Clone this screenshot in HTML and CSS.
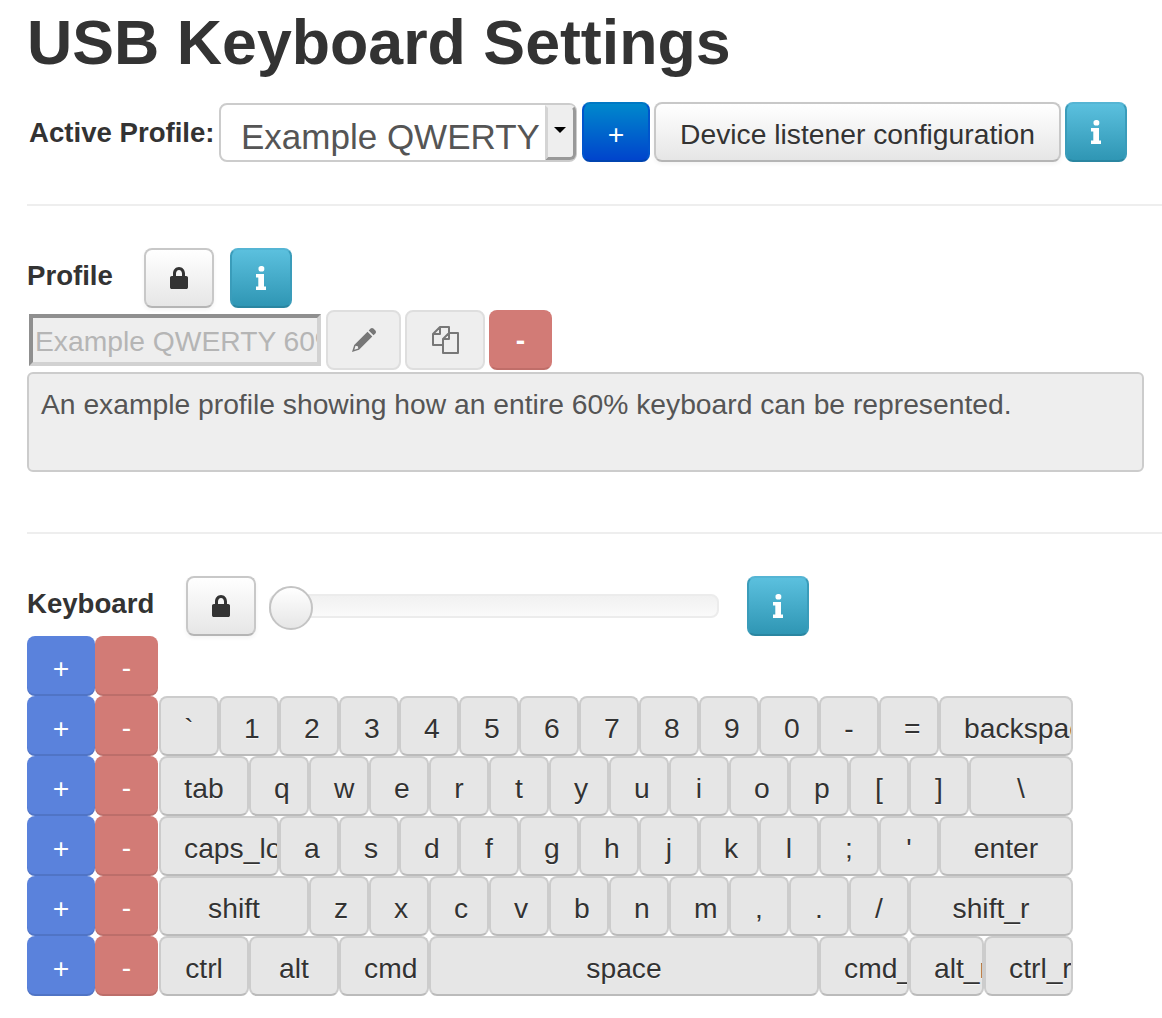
FILE: index.html
```html
<!DOCTYPE html>
<html lang="en">
<head>
<meta charset="utf-8">
<title>USB Keyboard Settings</title>
<link rel="stylesheet" href="styles.css">
</head>
<body>
<svg class="defs" width="0" height="0" aria-hidden="true">
  <symbol id="i-lock" viewBox="0 0 18 22"><path fill="currentColor" d="M3 9V6.5C3 2.9 5.600 0 9 0s6 2.900 6 6.500V9h1.200c1 0 1.800.8 1.800 1.800v9.400c0 1-.8 1.800-1.800 1.800H1.800C.8 22 0 21.200 0 20.200v-9.400C0 9.800.8 9 1.800 9H3zm3 0h6V6.500C12 4.600 10.700 3 9 3S6 4.600 6 6.500V9z"/></symbol>
  <symbol id="i-info" viewBox="0 0 10 24"><path fill="currentColor" d="M2.500 2.200C2.500 1 3.500 0 5 0h1c1.500 0 2.300 1 2.300 2.200v1.300C8.300 4.800 7.500 5.600 6 5.600H5c-1.500 0-2.500-.8-2.500-2.100V2.200zM0 8h8v12.500h2V24H0v-3.500h2.300V11.500H0V8z"/></symbol>
  <symbol id="i-pencil" viewBox="0 0 24 24"><path fill="currentColor" d="M18.600.6c.8-.8 2-.8 2.800 0l2 2c.8.8.8 2 0 2.800L21.500 7.300 16.700 2.500 18.600.6zM15.500 3.700l4.800 4.800L7 21.800 0 24l2.200-7L15.500 3.700zM3.500 17.700l-1.200 4 4-1.200-.5-2.300-2.300-.5z"/></symbol>
  <symbol id="i-copy" viewBox="0 0 27 28"><path fill="none" stroke="currentColor" stroke-width="2" stroke-linejoin="round" d="M17 7V1H8L1 8v11h10M8 1v7H1M17 7h9v20H11V13zM17 7v6h-6"/></symbol>
</svg>
<main class="page">
  <h1 class="title">USB Keyboard Settings</h1>
  <div class="active-row">
    <label class="strong active-label">Active Profile:</label>
    <div class="select-wrap">
      <select class="profile-select"><option>Example QWERTY</option></select>
      <span class="select-arrow"></span>
    </div>
    <button class="btn btn-primary btn-plus">+</button>
    <button class="btn btn-default btn-device">Device listener configuration</button>
    <button class="btn btn-info"><svg class="ic-info"><use href="#i-info"/></svg></button>
  </div>
  <hr class="rule rule-first">
  <section class="profile">
    <div class="head-row">
      <h2 class="strong section-name profile-name">Profile</h2>
      <button class="btn btn-default btn-lock"><svg class="ic-lock"><use href="#i-lock"/></svg></button>
      <button class="btn btn-info"><svg class="ic-info"><use href="#i-info"/></svg></button>
    </div>
    <div class="name-row">
      <input class="name-input" disabled value="Example QWERTY 60%">
      <button class="btn btn-off btn-edit" disabled><svg class="ic-pencil"><use href="#i-pencil"/></svg></button>
      <button class="btn btn-off btn-copy" disabled><svg class="ic-copy"><use href="#i-copy"/></svg></button>
      <button class="btn btn-off-red btn-minus" disabled>-</button>
    </div>
    <textarea class="description" disabled>An example profile showing how an entire 60% keyboard can be represented.</textarea>
  </section>
  <hr class="rule rule-second">
  <section class="keyboard">
    <div class="head-row">
      <h2 class="strong section-name keyboard-name">Keyboard</h2>
      <button class="btn btn-default btn-lock"><svg class="ic-lock"><use href="#i-lock"/></svg></button>
      <div class="slider"><span class="slider-handle"></span></div>
      <button class="btn btn-info"><svg class="ic-info"><use href="#i-info"/></svg></button>
    </div>
    <div class="key-row">
      <button class="row-add">+</button><button class="row-del">-</button>
    </div>
    <div class="key-row">
      <button class="row-add">+</button><button class="row-del">-</button>
      <button class="key">`</button><button class="key">1</button><button class="key">2</button><button class="key">3</button><button class="key">4</button><button class="key">5</button><button class="key">6</button><button class="key">7</button><button class="key">8</button><button class="key">9</button><button class="key">0</button><button class="key">-</button><button class="key">=</button><button class="key w134">backspace</button>
    </div>
    <div class="key-row">
      <button class="row-add">+</button><button class="row-del">-</button>
      <button class="key w90">tab</button><button class="key">q</button><button class="key">w</button><button class="key">e</button><button class="key">r</button><button class="key">t</button><button class="key">y</button><button class="key">u</button><button class="key">i</button><button class="key">o</button><button class="key">p</button><button class="key">[</button><button class="key">]</button><button class="key w104">\</button>
    </div>
    <div class="key-row">
      <button class="row-add">+</button><button class="row-del">-</button>
      <button class="key w120">caps_lock</button><button class="key">a</button><button class="key">s</button><button class="key">d</button><button class="key">f</button><button class="key">g</button><button class="key">h</button><button class="key">j</button><button class="key">k</button><button class="key">l</button><button class="key">;</button><button class="key">'</button><button class="key w134">enter</button>
    </div>
    <div class="key-row">
      <button class="row-add">+</button><button class="row-del">-</button>
      <button class="key w150">shift</button><button class="key">z</button><button class="key">x</button><button class="key">c</button><button class="key">v</button><button class="key">b</button><button class="key">n</button><button class="key">m</button><button class="key">,</button><button class="key">.</button><button class="key">/</button><button class="key w164">shift_r</button>
    </div>
    <div class="key-row">
      <button class="row-add">+</button><button class="row-del">-</button>
      <button class="key w90">ctrl</button><button class="key w90">alt</button><button class="key w90">cmd</button><button class="key w390">space</button><button class="key w90">cmd_r</button><button class="key w75">alt_r</button><button class="key w89">ctrl_r</button>
    </div>
  </section>
</main>
</body>
</html>
```
FILE: styles.css
```css
* { box-sizing: border-box; }
html, body { margin: 0; padding: 0; background: #fff; }
body { font-family: "Liberation Sans", Arial, sans-serif; color: #333; overflow-x: hidden; }
.defs { position: absolute; }
.page { padding: 0 0 0 27px; height: 1018px; overflow: hidden; }

.title { margin: 0; padding-top: 6px; height: 102px; font-size: 62.7px; line-height: 72px; font-weight: 700; color: #333; }

.strong { font-weight: 700; font-size: 27.6px; color: #333; margin: 0; }

.btn {
  display: inline-flex; align-items: center; justify-content: center;
  height: 60px; padding: 0; border-radius: 8px; border: 2px solid #bbb;
  font-family: inherit; font-size: 28.25px; line-height: 36px; cursor: pointer;
}
.btn-default {
  color: #333; background: linear-gradient(#fff, #e6e6e6);
  border-color: #c8c8c8 #c8c8c8 #b5b5b5;
  box-shadow: inset 0 2px 0 rgba(255,255,255,.2), 0 2px 4px rgba(0,0,0,.05);
}
.btn-primary {
  color: #fff; background: linear-gradient(#0088cc, #0044cc);
  border-color: #0078c4 #0055cc #0044b0;
  width: 68px; margin-left: 5px; padding-top: 4px;
}
.btn-info {
  color: #fff; width: 62px; background: linear-gradient(#5bc0de, #2f96b4);
  border-color: #55b5d4 #3a9cba #2a86a1;
}
.btn-off { color: #777; background: #eee; border-color: #dedede; }
.btn-off-red { color: #fff; background: #d27b76; border-color: #d27b76 #d27b76 #c06e69; font-weight: 700; }

.active-row { display: flex; align-items: center; height: 60px; }
.active-label { margin: 2px 0 0 2px; width: 190px; }
.select-wrap { position: relative; width: 358px; height: 59px; }
.profile-select {
  appearance: none; -webkit-appearance: none; width: 100%; height: 100%;
  background: #fff; border: 2px solid #ccc; border-radius: 8px;
  padding: 8px 0 0 20px; font-family: inherit; font-size: 35px; color: #555;
}
.select-arrow {
  position: absolute; right: 1px; top: 2px; bottom: 2px; width: 31px;
  background: #eee; border: 3px solid; border-color: #eee #999 #999 #d4d4d4;
  border-radius: 0 6px 6px 0;
}
.select-arrow::after {
  content: ""; position: absolute; left: 6px; top: 19px;
  border: 6px solid transparent; border-top: 6px solid #000; border-bottom: 0;
}
.btn-device { width: 407px; margin-left: 4px; padding-top: 4px; }
.btn-device + .btn-info { margin-left: 4px; }

.ic-info { width: 10px; height: 24px; display: block; }
.ic-lock { width: 18px; height: 22px; display: block; }
.ic-pencil { width: 24px; height: 24px; display: block; }
.ic-copy { width: 27px; height: 28px; display: block; }

.rule { border: 0; height: 2px; background: #eee; margin: 0; }
.rule-first { margin-top: 42px; }
.profile { margin-top: 42px; }
.rule-second { margin-top: 60px; }
.keyboard { margin-top: 42px; }

.head-row { display: flex; align-items: center; height: 60px; }
.section-name { line-height: 60px; margin-bottom: 4px; }
.profile-name { width: 117px; }
.btn-lock { width: 70px; height: 60px; }
.profile-name + .btn-lock + .btn-info { margin-left: 16px; }

.name-row { display: flex; align-items: center; height: 60px; margin-top: 2px; }
.name-input {
  width: 292px; height: 52px; margin: 0 1px 0 2px; padding: 3px 0 0 2px;
  border: 4px solid; border-color: #8f8f8f #d2d2d2 #d2d2d2 #8f8f8f;
  background: #eee; font-family: inherit; font-size: 28.25px; color: #b5b5b5;
}
.btn-edit { width: 75px; margin-left: 4px; }
.btn-copy { width: 80px; margin-left: 4px; }
.btn-minus { width: 63px; margin-left: 4px; }

.description {
  display: block; width: 1117px; height: 100px; margin: 2px 0 0; padding: 14px 12px;
  background: #eee; border: 2px solid #ccc; border-radius: 6px; resize: none;
  font-family: inherit; font-size: 28.25px; line-height: 32px; color: #555;
}

.keyboard-name { width: 159px; }
.slider {
  position: relative; width: 450px; height: 24px; margin: 0 28px 0 13px;
  background: linear-gradient(#f1f1f1, #fafafa); border: 2px solid #ececec; border-radius: 8px;
}
.slider-handle {
  position: absolute; left: -2px; top: -10px; width: 44px; height: 44px; border-radius: 50%;
  background: linear-gradient(#fff, #e6e6e6); border: 2px solid #c4c4c4;
}

.key-row { display: flex; height: 60px; }
.row-add, .row-del {
  height: 60px; padding: 4px 0 0; border-radius: 8px; color: #fff; font-family: inherit; font-size: 28.25px;
  border: 0; box-shadow: inset 0 -2px 0 rgba(0,0,0,.1);
}
.row-add { width: 68px; background: #5a82dc; }
.row-del { width: 63px; background: #d27b76; font-weight: 400; padding-top: 2px; }
.key {
  flex: none; width: 60px; height: 60px; padding: 4px 23px 0; overflow: hidden; white-space: nowrap;
  margin: 0; background: #e6e6e6; color: #333; font-family: inherit; font-size: 28.25px;
  border: 2px solid #ccc; border-bottom-color: #bbb; border-radius: 8px; text-align: center;
  text-shadow: 0 1px 1px rgba(255,255,255,.75);
}
.row-del + .key { margin-left: 1px; }
.w75 { width: 75px; }
.w89 { width: 89px; }
.w90 { width: 90px; }
.w104 { width: 104px; }
.w120 { width: 120px; }
.w134 { width: 134px; }
.w150 { width: 150px; }
.w164 { width: 164px; }
.w390 { width: 390px; }
```
